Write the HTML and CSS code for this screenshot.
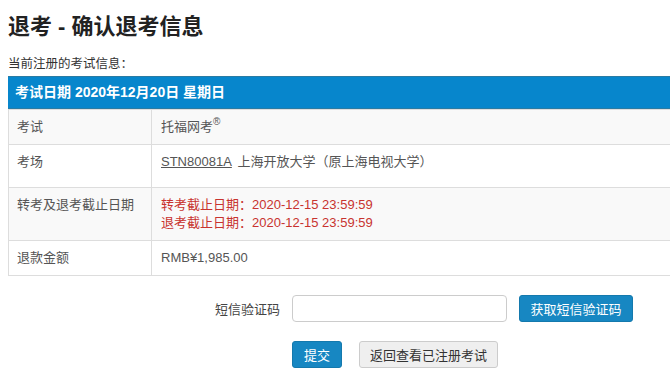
FILE: index.html
```html
<!DOCTYPE html>
<html lang="zh-CN">
<head>
<meta charset="utf-8">
<title>退考 - 确认退考信息</title>
<link rel="stylesheet" href="styles.css">
</head>
<body>
<div class="page">
  <h1 class="title">退考 - 确认退考信息</h1>
  <p class="subtitle">当前注册的考试信息：</p>
  <div class="info">
    <div class="info-head">考试日期 2020年12月20日 星期日</div>
    <div class="row alt">
      <div class="label">考试</div>
      <div class="value">托福网考<span class="reg">®</span></div>
    </div>
    <div class="row tall">
      <div class="label">考场</div>
      <div class="value"><a class="code">STN80081A</a> 上海开放大学（原上海电视大学）</div>
    </div>
    <div class="row alt">
      <div class="label">转考及退考截止日期</div>
      <div class="value red">转考截止日期：2020-12-15 23:59:59<br>退考截止日期：2020-12-15 23:59:59</div>
    </div>
    <div class="row">
      <div class="label">退款金额</div>
      <div class="value">RMB¥1,985.00</div>
    </div>
  </div>
  <div class="form">
    <div class="form-row">
      <label class="form-label">短信验证码</label>
      <input class="input" type="text">
      <button class="btn btn-blue btn-sms">获取短信验证码</button>
    </div>
    <div class="form-row">
      <span class="form-label"></span>
      <button class="btn btn-blue">提交</button>
      <button class="btn btn-gray">返回查看已注册考试</button>
    </div>
  </div>
</div>
</body>
</html>
```
FILE: styles.css
```css
html, body {
  margin: 0;
  padding: 0;
  background: #fff;
  overflow: hidden;
}
body {
  font-family: "Liberation Sans", "Noto Sans CJK SC", sans-serif;
  color: #444;
  font-size: 13px;
}
.page {
  padding: 12px 0 0 8px;
  width: 720px;
}
.title {
  margin: 0;
  font-size: 22px;
  line-height: 30px;
  font-weight: bold;
  color: #222;
}
.subtitle {
  margin: 13px 0 3px;
  font-size: 12.5px;
  line-height: 18px;
  color: #333;
}
.info {
  border-left: 1px solid #ddd;
  border-bottom: 1px solid #ddd;
}
.info-head {
  background: #0786cc;
  border-top: 1px solid #2a7ba3;
  border-bottom: 1px solid #2a7ba3;
  color: #fff;
  font-weight: bold;
  font-size: 14px;
  line-height: 31px;
  padding-left: 7px;
  margin-left: -1px;
}
.row {
  display: flex;
  border-top: 1px solid #ddd;
  background: #fff;
}
.row.alt {
  background: #f9f9f9;
}
.label {
  width: 134px;
  padding: 8px 0 8px 8px;
  line-height: 18px;
  border-right: 1px solid #ddd;
  color: #555;
}
.value {
  flex: 1;
  padding: 8px 9px;
  line-height: 18px;
  color: #555;
}
.tall .label, .tall .value {
  padding-bottom: 16px;
}
.reg {
  font-size: 10px;
  line-height: 10px;
  vertical-align: top;
  position: relative;
  top: -1px;
}
.code {
  color: #555;
  text-decoration: underline;
  margin-right: 2px;
}
.red {
  color: #c8332f;
}
.form {
  margin-top: 19px;
  display: flex;
  flex-direction: column;
  gap: 19px;
}
.form-row {
  display: flex;
  align-items: center;
  gap: 12px;
}
.form-label {
  width: 272px;
  text-align: right;
  color: #444;
  font-size: 13px;
}
.input {
  width: 215px;
  height: 27px;
  box-sizing: border-box;
  border: 1px solid #ccc;
  border-radius: 4px;
  margin: 0;
}
.btn {
  height: 27px;
  box-sizing: border-box;
  border-radius: 3px;
  font-family: "Liberation Sans", "Noto Sans CJK SC", sans-serif;
  font-size: 13px;
  padding: 0 11px;
  margin: 0;
}
.btn-blue {
  background: #1787c2;
  border: 1px solid #1479ad;
  color: #fff;
}
.btn-sms {
  width: 114px;
  padding: 0;
}
.btn-gray {
  background: #efefef;
  border: 1px solid #ccc;
  color: #333;
  margin-left: 5px;
  width: 139px;
  padding: 0;
}
```
